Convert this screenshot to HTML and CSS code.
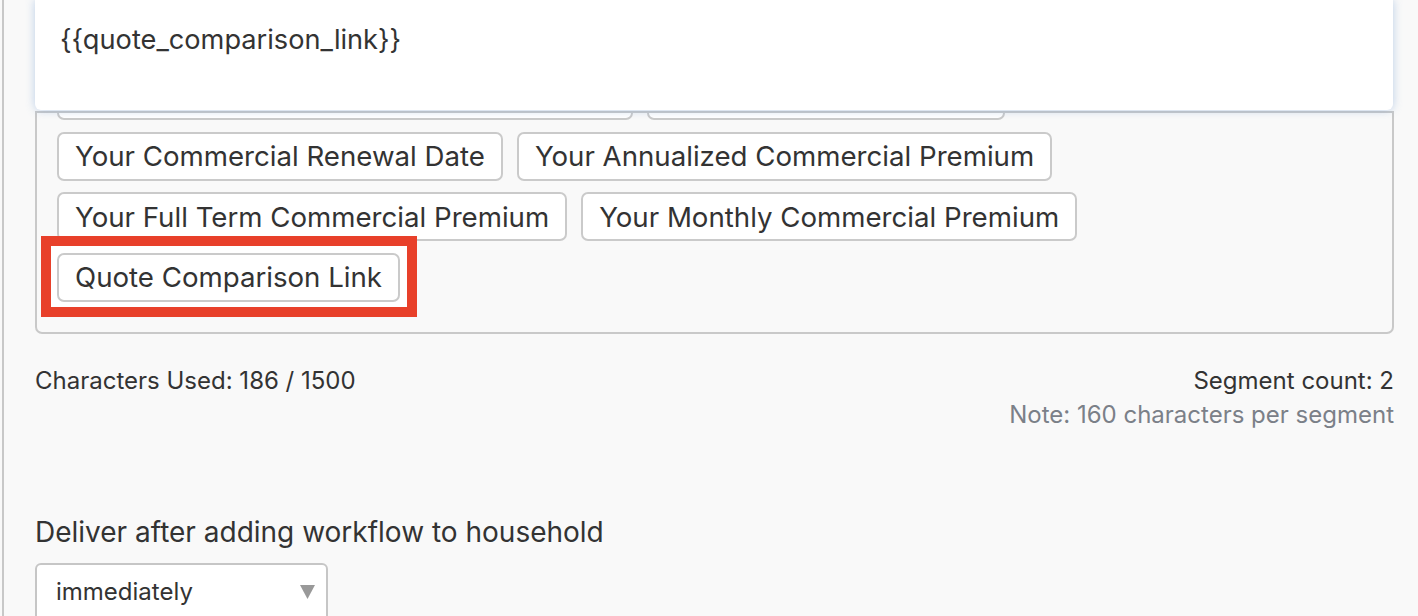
FILE: index.html
```html
<!DOCTYPE html>
<html lang="en">
<head>
<meta charset="utf-8">
<title>Message editor</title>
<link rel="stylesheet" href="styles.css">
</head>
<body>
<div class="panel">
  <div class="editor">{{quote_comparison_link}}</div>
  <div class="vars">
    <div class="chips">
      <span class="chip">Your Commercial Policy Expiration Notice</span>
      <span class="chip">Your Commercial Carrier</span>
      <span class="chip">Your Commercial Renewal Date</span>
      <span class="chip">Your Annualized Commercial Premium</span>
      <span class="chip">Your Full Term Commercial Premium</span>
      <span class="chip">Your Monthly Commercial Premium</span>
      <span class="highlight"><span class="chip">Quote Comparison Link</span></span>
    </div>
  </div>
  <div class="counts">
    <div class="used">Characters Used: 186 / 1500</div>
    <div class="seg">
      <div>Segment count: 2</div>
      <div class="note">Note: 160 characters per segment</div>
    </div>
  </div>
  <div class="field">
    <div class="label">Deliver after adding workflow to household</div>
    <div class="select">
      <span>immediately</span>
      <svg class="caret" width="15" height="14" viewBox="0 0 15 14"><polygon points="0,0 15,0 7.5,14" fill="#999"/></svg>
    </div>
  </div>
</div>
</body>
</html>
```

FILE: styles.css
```css
html, body {
  margin: 0;
  padding: 0;
  background: #f9f9f9;
  font-family: Inter, "Noto Sans", sans-serif;
  color: #333;
  overflow: hidden;
}

.panel {
  margin-left: 2px;
  border-left: 2px solid #c8c8c8;
  padding: 0 24px 0 31px;
  min-height: 100vh;
  box-sizing: border-box;
}

.editor {
  position: relative;
  z-index: 1;
  height: 110px;
  margin: 0 1px 1px 0;
  padding: 22px 25px 0;
  box-sizing: border-box;
  background: #fff;
  border-radius: 0 0 6px 6px;
  box-shadow: 0 0 10px rgba(110, 155, 210, 0.45);
  font-size: 27.2px;
  line-height: 36px;
  color: #333;
}

.vars {
  border: 2px solid #c9c9c9;
  border-radius: 0 0 7px 7px;
  overflow: hidden;
  padding: 0 20px 30px;
}

.chips {
  display: flex;
  flex-wrap: wrap;
  gap: 11.5px 14px;
  margin-top: -42px;
}

.chip {
  display: inline-flex;
  align-items: center;
  height: 49px;
  box-sizing: border-box;
  padding: 0 16px;
  border: 2px solid #cacaca;
  border-radius: 7px;
  background: #fff;
  font-size: 27.65px;
  color: #333;
  white-space: nowrap;
}

.highlight {
  position: relative;
  z-index: 0;
  display: inline-flex;
}

.highlight::before {
  content: "";
  position: absolute;
  left: -16px;
  right: -17px;
  top: -17px;
  bottom: -15px;
  border: 10px solid #e8402a;
  background: #fff;
  z-index: -1;
}

.counts {
  display: flex;
  justify-content: space-between;
  margin-top: 30px;
  font-size: 24px;
  line-height: 34px;
  color: #333;
}

.seg {
  text-align: right;
}

.note {
  color: #7b8088;
}

.field {
  margin-top: 83px;
}

.label {
  font-size: 28px;
  line-height: 34px;
  color: #333;
}

.select {
  margin-top: 14px;
  width: 293px;
  height: 80px;
  box-sizing: border-box;
  border: 2px solid #c6c6c6;
  border-radius: 6px 6px 0 0;
  background: #fff;
  display: flex;
  justify-content: space-between;
  align-items: flex-start;
  padding: 12px 11px 0 19px;
  font-size: 24px;
  line-height: 30px;
  color: #333;
}

.caret {
  margin-top: 8px;
}
```
